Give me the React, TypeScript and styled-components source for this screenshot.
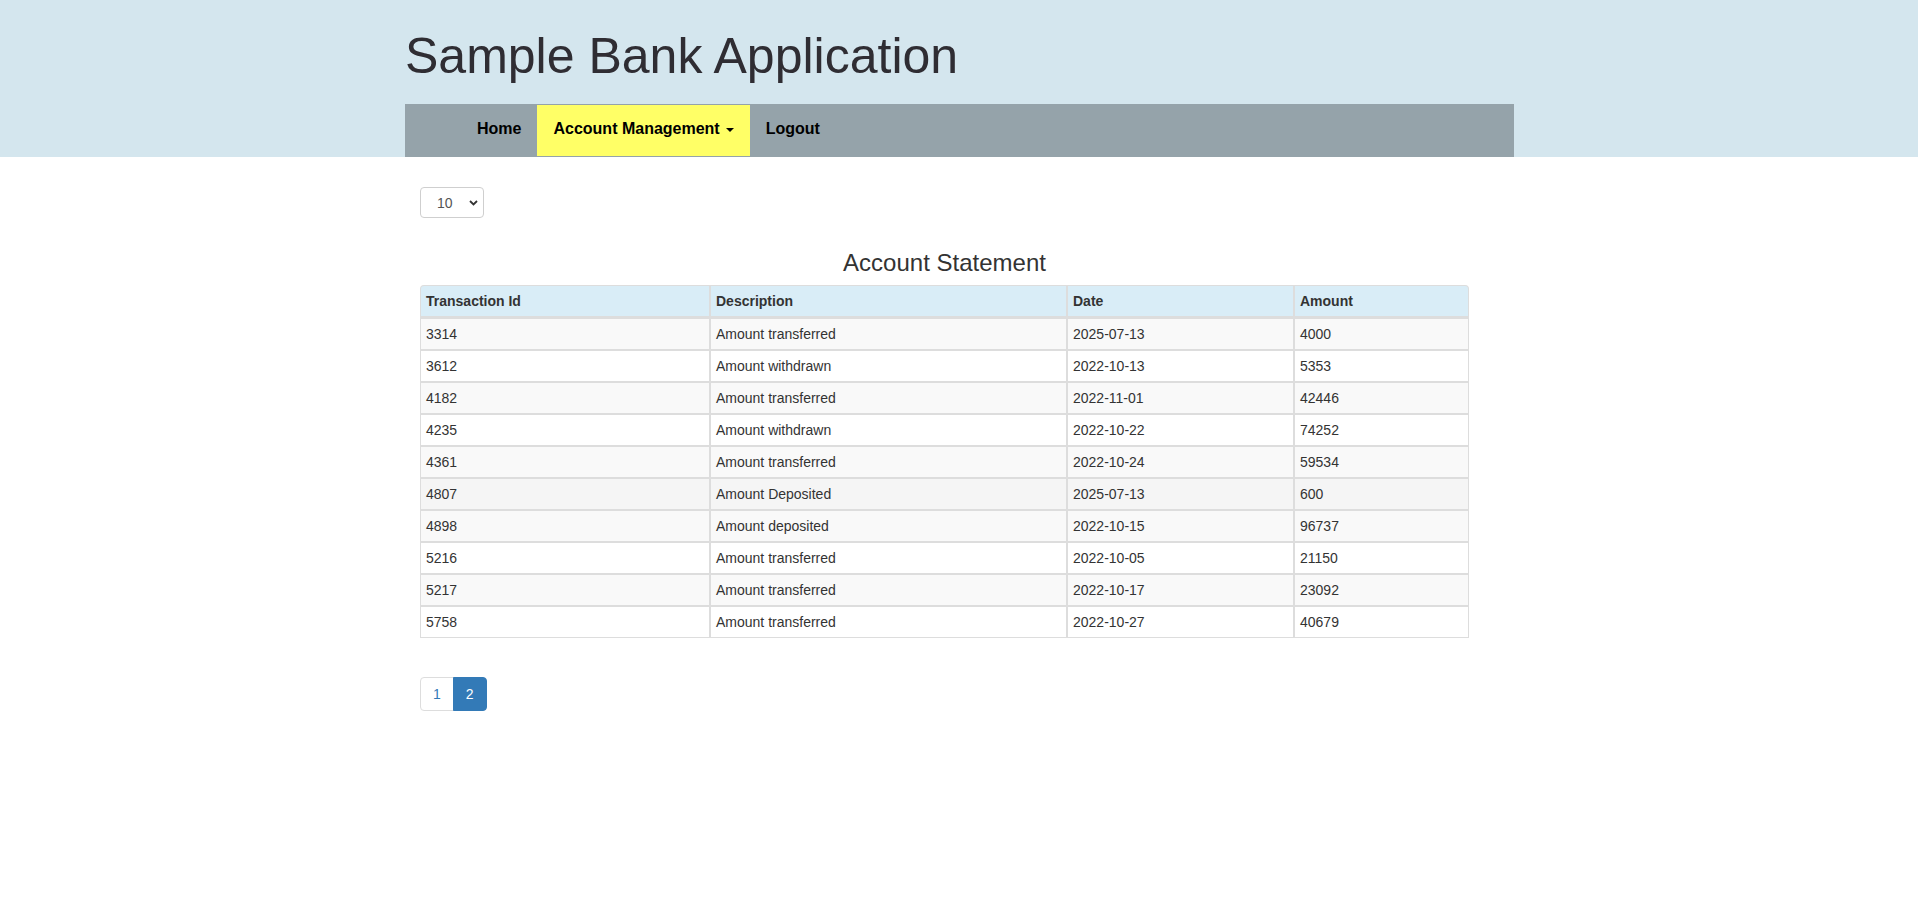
import React from "react";
import styled, { createGlobalStyle } from "styled-components";

const GlobalStyle = createGlobalStyle`
  * { box-sizing: border-box; }
  body {
    margin: 0;
    font-family: "Liberation Sans", Arial, sans-serif;
    font-size: 14px;
    line-height: 1.42857;
    color: #333;
    background: #fff;
  }
`;

const Header = styled.header`
  background: #d4e6ee;
`;

const HeaderInner = styled.div`
  width: 1109px;
  margin-left: calc(50% - 554px);
  padding-top: 29px;
`;

const Title = styled.h1`
  margin: 0 0 20px;
  font-size: 50px;
  font-weight: 400;
  line-height: 55px;
  color: #2f2d33;
`;

const Nav = styled.nav`
  display: flex;
  height: 53px;
  background: #95a3aa;
  border: 1px solid #95a3aa;
  padding-left: 55px;
`;

const NavLink = styled.a<{ $active?: boolean }>`
  display: block;
  height: 51px;
  padding: 14px 16px 17px;
  font-size: 16px;
  font-weight: 700;
  line-height: 20px;
  color: #000;
  text-decoration: none;
  white-space: nowrap;
  background: ${(p) => (p.$active ? "#ffff66" : "transparent")};
  cursor: pointer;
`;

const Caret = styled.span`
  display: inline-block;
  width: 0;
  height: 0;
  margin-left: 6px;
  vertical-align: middle;
  border-top: 4px solid #000;
  border-left: 4px solid transparent;
  border-right: 4px solid transparent;
`;

const Main = styled.main`
  width: 1109px;
  margin-left: calc(50% - 554px);
  padding: 30px 15px 40px;
`;

const SelectWrap = styled.div`
  position: relative;
  width: 64px;
  height: 31px;
`;

const PageSize = styled.select`
  appearance: none;
  width: 64px;
  height: 31px;
  padding: 0 0 0 16px;
  border: 1px solid #cfcfcf;
  border-radius: 4px;
  background: #fff;
  font-family: "Liberation Sans", Arial, sans-serif;
  font-size: 14px;
  color: #555;
  outline: none;
`;

const Chevron = styled.svg`
  position: absolute;
  right: 6px;
  top: 13px;
  pointer-events: none;
`;

const Heading = styled.h3`
  width: 1049px;
  margin: 32px 0 9px;
  font-size: 24px;
  font-weight: 400;
  line-height: 26px;
  text-align: center;
  color: #333;
`;

const Table = styled.table`
  width: 1049px;
  table-layout: fixed;
  border-collapse: separate;
  border-spacing: 0;
`;

const Th = styled.th<{ $w: number }>`
  width: ${(p) => p.$w}px;
  padding: 5px;
  line-height: 20px;
  text-align: left;
  font-weight: 700;
  color: #333;
  background: #d9edf7;
  border: 1px solid #ddd;
  border-bottom-width: 2px;
  &:first-child { border-top-left-radius: 4px; }
  &:last-child { border-top-right-radius: 4px; }
`;

const Tr = styled.tr<{ $bg: string }>`
  background: ${(p) => p.$bg};
`;

const Td = styled.td`
  padding: 5px;
  line-height: 20px;
  color: #333;
  border: 1px solid #ddd;
`;

const Pagination = styled.ul`
  display: flex;
  margin: 39px 0 0;
  padding: 0;
  list-style: none;
`;

const PageItem = styled.li<{ $active?: boolean }>`
  padding: 6px 12px;
  margin-left: -1px;
  line-height: 20px;
  border: 1px solid ${(p) => (p.$active ? "#337ab7" : "#ddd")};
  background: ${(p) => (p.$active ? "#337ab7" : "#fff")};
  color: ${(p) => (p.$active ? "#fff" : "#337ab7")};
  cursor: pointer;
  &:first-child {
    margin-left: 0;
    border-top-left-radius: 4px;
    border-bottom-left-radius: 4px;
  }
  &:last-child {
    border-top-right-radius: 4px;
    border-bottom-right-radius: 4px;
  }
`;

const rows = [
  ["3314", "Amount transferred", "2025-07-13", "4000"],
  ["3612", "Amount withdrawn", "2022-10-13", "5353"],
  ["4182", "Amount transferred", "2022-11-01", "42446"],
  ["4235", "Amount withdrawn", "2022-10-22", "74252"],
  ["4361", "Amount transferred", "2022-10-24", "59534"],
  ["4807", "Amount Deposited", "2025-07-13", "600"],
  ["4898", "Amount deposited", "2022-10-15", "96737"],
  ["5216", "Amount transferred", "2022-10-05", "21150"],
  ["5217", "Amount transferred", "2022-10-17", "23092"],
  ["5758", "Amount transferred", "2022-10-27", "40679"],
];

const columns: [string, number][] = [
  ["Transaction Id", 290],
  ["Description", 357],
  ["Date", 227],
  ["Amount", 175],
];

export default function App() {
  return (
    <>
      <GlobalStyle />
      <Header>
        <HeaderInner>
          <Title>Sample Bank Application</Title>
          <Nav>
            <NavLink>Home</NavLink>
            <NavLink $active>
              Account Management
              <Caret />
            </NavLink>
            <NavLink>Logout</NavLink>
          </Nav>
        </HeaderInner>
      </Header>
      <Main>
        <SelectWrap>
          <PageSize defaultValue="10">
            <option value="5">5</option>
            <option value="10">10</option>
            <option value="20">20</option>
          </PageSize>
          <Chevron width="9" height="6" viewBox="0 0 9 6">
            <path d="M1 1 L4.5 4.5 L8 1" fill="none" stroke="#333" strokeWidth="1.8" />
          </Chevron>
        </SelectWrap>
        <Heading>Account Statement</Heading>
        <Table>
          <thead>
            <tr>
              {columns.map(([label, w]) => (
                <Th key={label} $w={w}>
                  {label}
                </Th>
              ))}
            </tr>
          </thead>
          <tbody>
            {rows.map((r, i) => (
              <Tr key={r[0]} $bg={i === 5 ? "#f5f5f5" : i % 2 === 0 ? "#f9f9f9" : "#fff"}>
                {r.map((c, j) => (
                  <Td key={j}>{c}</Td>
                ))}
              </Tr>
            ))}
          </tbody>
        </Table>
        <Pagination>
          <PageItem>1</PageItem>
          <PageItem $active>2</PageItem>
        </Pagination>
      </Main>
    </>
  );
}
